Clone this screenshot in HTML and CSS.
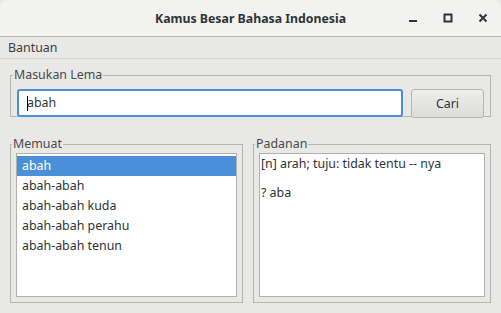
FILE: index.html
```html
<!DOCTYPE html>
<html>
<head>
<meta charset="utf-8">
	<title>Kamus Besar Bahasa Indonesia</title>
	<link rel="stylesheet" href="styles.css">
</head>
<body>
	<div class="window">
		<div class="titlebar">
			<span class="title">Kamus Besar Bahasa Indonesia</span>
			<div class="controls">
				<svg class="ctl" width="14" height="14" viewBox="0 0 14 14"><rect x="3" y="9" width="8" height="2" fill="#2e3436"/></svg>
				<svg class="ctl" width="14" height="14" viewBox="0 0 14 14"><rect x="3.5" y="3.5" width="7" height="7" fill="none" stroke="#2e3436" stroke-width="2"/></svg>
				<svg class="ctl" width="14" height="14" viewBox="0 0 14 14"><path d="M3.5 3.5 L10.5 10.5 M10.5 3.5 L3.5 10.5" stroke="#2e3436" stroke-width="2"/></svg>
			</div>
		</div>
		<div class="menubar"><span class="menu">Bantuan</span></div>
		<div class="content">
			<fieldset class="box search">
				<legend>Masukan Lema</legend>
				<div class="entry"><span class="caret"></span>abah</div>
				<button class="btn">Cari</button>
			</fieldset>
			<div class="panes">
				<fieldset class="box left">
					<legend>Memuat</legend>
					<ul class="list">
						<li class="sel">abah</li>
						<li>abah-abah</li>
						<li>abah-abah kuda</li>
						<li>abah-abah perahu</li>
						<li>abah-abah tenun</li>
					</ul>
				</fieldset>
				<fieldset class="box right">
					<legend>Padanan</legend>
					<div class="text">[n] arah; tuju: tidak tentu -- nya

? aba</div>
				</fieldset>
			</div>
		</div>
	</div>
</body>
</html>
```

FILE: styles.css
```css
body,ul,li{padding: 0;margin: 0;list-style: none;}
body{background-color: #e8e8e7;font-family: "Noto Sans", "DejaVu Sans", sans-serif;font-size: 12.4px;color: #3c3c3c;}

.window{width: 501px;height: 313px;background-color: #e8e8e7;overflow: hidden;border-radius: 7px 7px 0 0;}
.titlebar{height: 36px;background-color: #f2f2f1;border-bottom: 1px solid #b8b8b5;display: flex;align-items: center;justify-content: center;position: relative;}
.title{font-weight: bold;color: #2e3436;font-size: 12.3px;}
.controls{position: absolute;right: 11px;top: 11px;display: flex;gap: 21px;}
.menubar{height: 21px;border-bottom: 1px solid #d6d6d4;display: flex;align-items: center;padding-left: 8px;}

.content{padding: 8px 10px 0 10px;}
.box{margin: 0;border: 1px solid #b4b4b2;padding: 6px 6px 5px 6px;}
.box legend{padding: 0 1px;margin-left: -4px;line-height: 16px;color: #4a4a4a;}

.search{display: flex;gap: 8px;height: 50px;box-sizing: border-box;}
.entry{flex: 1;height: 28px;box-sizing: border-box;border: 2px solid #4a90d9;border-radius: 3px;background-color: #fff;padding-left: 8px;line-height: 24px;color: #2e3436;position: relative;}
.caret{display: inline-block;width: 1px;height: 15px;background-color: #000;vertical-align: middle;position: absolute;left: 8px;top: 5px;}
.btn{width: 73px;height: 29px;border: 1px solid #b6b6b3;border-radius: 3px;background: linear-gradient(#ededec, #dcdcda);font-family: inherit;font-size: 12.4px;color: #2e3436;}

.panes{display: flex;gap: 10px;margin-top: 19px;}
.box.left,.box.right{height: 167px;box-sizing: border-box;padding: 1px 5px 5px 5px;}
.left{width: 233px;}
.right{flex: 1;}
.list,.text{height: 144px;box-sizing: border-box;border: 1px solid #b0b0ae;background-color: #fff;}
.list{padding-top: 2px;}
.list li{height: 20px;line-height: 20px;padding-left: 5px;color: #2e3436;}
.list li.sel{background-color: #4a90d9;color: #fff;}
.text{white-space: pre-wrap;line-height: 14.5px;padding: 3px 0 0 1px;color: #2e3436;}
```
